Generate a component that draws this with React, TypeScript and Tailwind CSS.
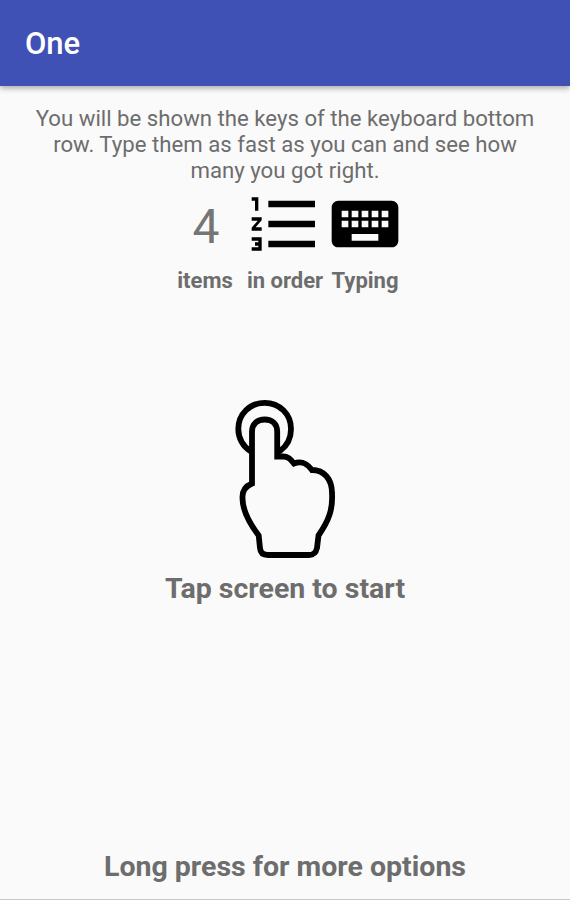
import { MdFormatListNumbered, MdKeyboard } from 'react-icons/md';

function TapHand() {
  return (
    <svg
      className="block h-[160px] w-[101px]"
      viewBox="235 399 101 160"
      fill="none"
      stroke="#000"
      strokeWidth="5.8"
      strokeLinecap="round"
      strokeLinejoin="round"
    >
      <path d="M251 451.500C243 447 238.300 438 238.300 429C238.300 414 250 402.800 264.700 402.800C279.500 402.800 291 414 291 429C291 437.500 287.500 445.500 280 451" />
      <path
        strokeLinejoin="miter"
        d="M252 483.500V431.500C252 424 257.500 419.500 264.700 419.500C272 419.500 277.200 424 277.200 431.500V456.500H283C288.500 456.500 290.500 459.500 294 463.500C302 460.500 307 463.500 312 470C324 470 332 479 332 493C333 510 328.500 521 318.500 535.500L317 548Q315.500 555 309 555H268Q260.500 555 260 548L258.700 535.500C250 524 242 511 242.500 497C242.500 491 246 486 252 483.500Z"
      />
    </svg>
  );
}

export default function App() {
  return (
    <div className="flex h-[900px] w-[570px] flex-col overflow-hidden border-b border-[#c8c8c8] bg-[#fafafa] font-['Roboto',sans-serif] text-[#6d6d6d]">
      <header className="flex h-[86px] shrink-0 items-center bg-[#3f51b5] px-[25px] pt-0.5 shadow-[0_2px_6px_rgba(0,0,0,0.35)]">
        <h1 className="text-[31px] leading-9 font-medium text-white">One</h1>
      </header>

      <main className="flex flex-1 flex-col items-center">
        <p className="mt-[19px] mb-px text-center text-[22.2px] leading-[26px] whitespace-nowrap">
          You will be shown the keys of the keyboard bottom
          <br />
          row. Type them as fast as you can and see how
          <br />
          many you got right.
        </p>

        <div className="grid grid-cols-[80px_80px_80px]">
          <div className="flex h-20 items-center justify-center pt-1.5 pl-0.5 text-[48px] leading-none text-[#757575]">4</div>
          <MdFormatListNumbered className="size-20 text-black" />
          <MdKeyboard className="size-20 text-black" />
        </div>
        <div className="mt-px grid grid-cols-[80px_80px_80px] justify-items-center text-[22px] leading-8 font-bold whitespace-nowrap">
          <span>items</span>
          <span>in order</span>
          <span>Typing</span>
        </div>

        <div className="mt-[102px]">
          <TapHand />
        </div>
        <p className="mt-3 text-[28.5px] leading-9 font-bold">Tap screen to start</p>
        <p className="mt-auto mb-3.5 text-[28.5px] leading-9 font-bold">Long press for more options</p>
      </main>
    </div>
  );
}
